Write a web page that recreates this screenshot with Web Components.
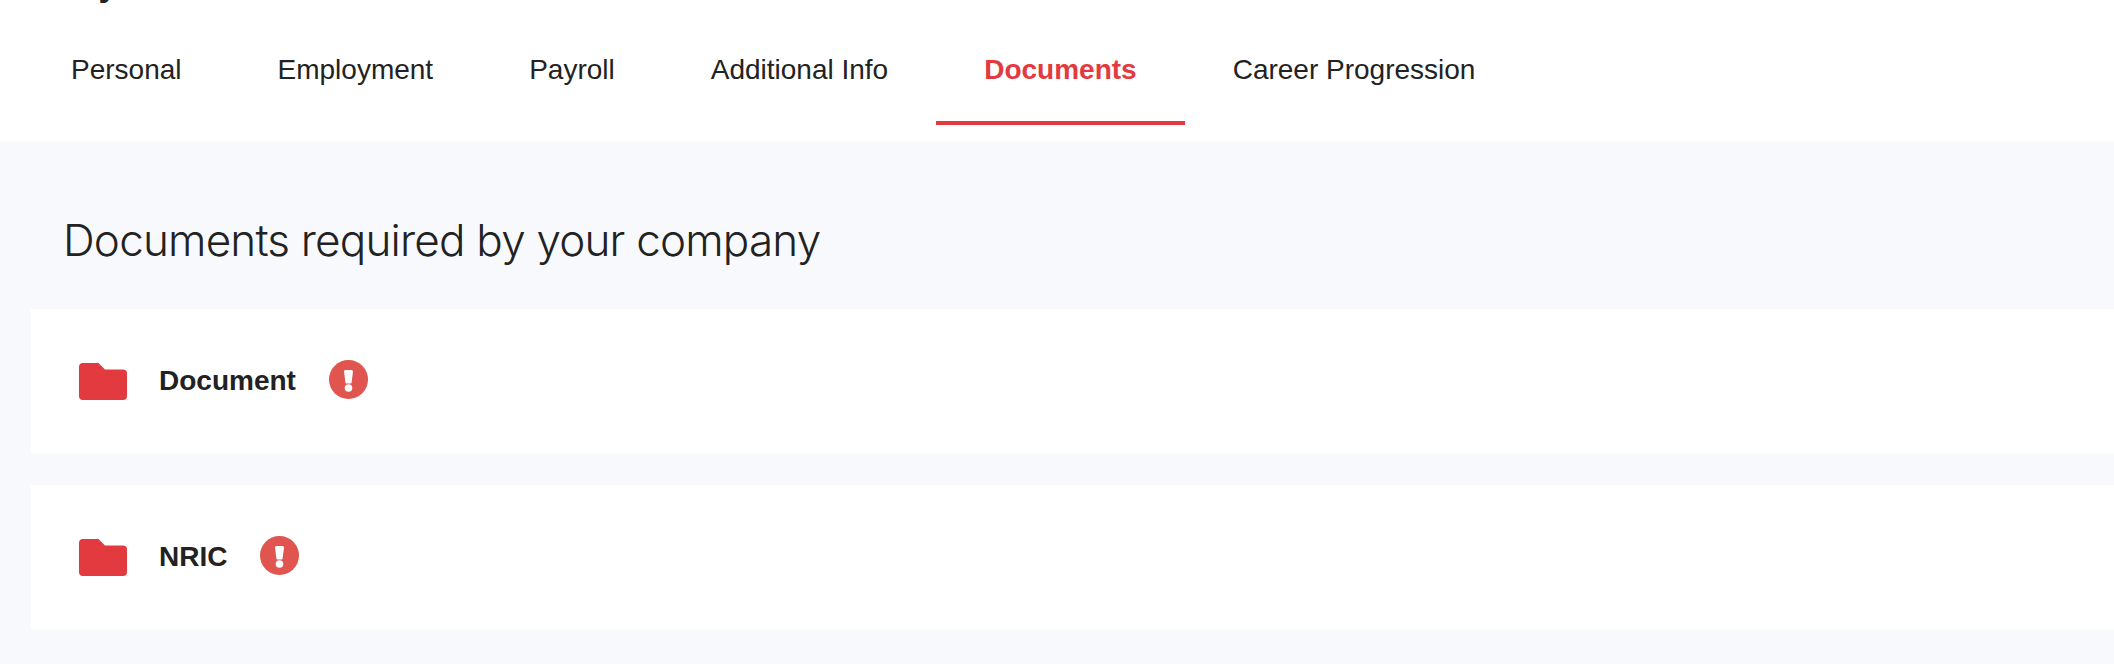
<!doctype html>
<html><head><meta charset="utf-8">
<style>
html,body{margin:0;padding:0;background:#f8f9fc;height:100%;overflow:hidden}
body{font-family:"Liberation Sans",Arial,sans-serif;color:#222}
</style></head><body>
<app-page>
  <span slot="title">Payroll</span>
  <tab-bar slot="tabs">
    <tab-item>Personal</tab-item>
    <tab-item>Employment</tab-item>
    <tab-item>Payroll</tab-item>
    <tab-item>Additional Info</tab-item>
    <tab-item active>Documents</tab-item>
    <tab-item>Career Progression</tab-item>
  </tab-bar>
  <doc-section heading="Documents required by your company">
    <doc-card>Document</doc-card>
    <doc-card>NRIC</doc-card>
  </doc-section>
</app-page>
<script>
function def(name, html){
  customElements.define(name, class extends HTMLElement{
    constructor(){super();this.attachShadow({mode:'open'}).innerHTML=html;}
    connectedCallback(){
      const h=this.getAttribute('heading');
      if(h!==null){this.shadowRoot.querySelector('h2').textContent=h;}
    }
  });
}
def('app-page',`<style>
:host{display:block}
.head{background:#fff;height:141px;overflow:hidden;display:flex;flex-direction:column}
.title{height:0;font:700 34px/34px "Liberation Sans",sans-serif;color:#222;margin:-33px 0 33px 57px}
</style><div class="head"><div class="title"><slot name="title"></slot></div><slot name="tabs"></slot></div><slot></slot>`);
def('tab-bar',`<style>
:host{display:flex;height:125px;padding:0 0 0 23px;box-sizing:border-box;align-items:stretch}
</style><slot></slot>`);
def('tab-item',`<style>
:host{display:flex;align-items:center;box-sizing:border-box;padding:18px 48px 0;height:125px;font-size:28px;color:#222;border-bottom:4px solid transparent}
:host([active]){font-weight:700;color:#e33a40;border-bottom-color:#e33a40}
</style><slot></slot>`);
def('doc-section',`<style>
:host{display:block;padding:0 0 0 31px}
h2{margin:0;height:168px;box-sizing:border-box;padding:73px 0 0 32px;font:300 44px/1.2 Inter,sans-serif;letter-spacing:-.8px;color:#222}
.list{display:flex;flex-direction:column;gap:32px}
</style><h2></h2><div class="list"><slot></slot></div>`);
def('doc-card',`<style>
:host{display:flex;align-items:center;height:144px;background:#fff;padding:0 0 0 48px;box-sizing:border-box}
svg{display:block;flex:none}
.folder{width:48px;height:37px}
.label{font-weight:700;font-size:28px;margin-left:32px;color:#222}
.alert{width:39px;height:39px;margin-left:33px;margin-top:-4px}
</style>
<svg class="folder" viewBox="0 0 48 37"><path fill="#e33a40" d="M4 0H19.500L26 6.500H44A4 4 0 0 1 48 10.500V33A4 4 0 0 1 44 37H4A4 4 0 0 1 0 33V4A4 4 0 0 1 4 0Z"/></svg>
<span class="label"><slot></slot></span>
<svg class="alert" viewBox="0 0 39 39"><circle cx="19.500" cy="19.500" r="19.500" fill="#e0554f"/><path fill="#fff" d="M16.500 10H22.500A1.500 1.500 0 0 1 24 11.500L22.600 22.500A1 1 0 0 1 21.600 23.500H17.400A1 1 0 0 1 16.400 22.500L15 11.500A1.500 1.500 0 0 1 16.500 10Z"/><circle cx="19.500" cy="28" r="3.800" fill="#fff"/></svg>`);
</script></body></html>
